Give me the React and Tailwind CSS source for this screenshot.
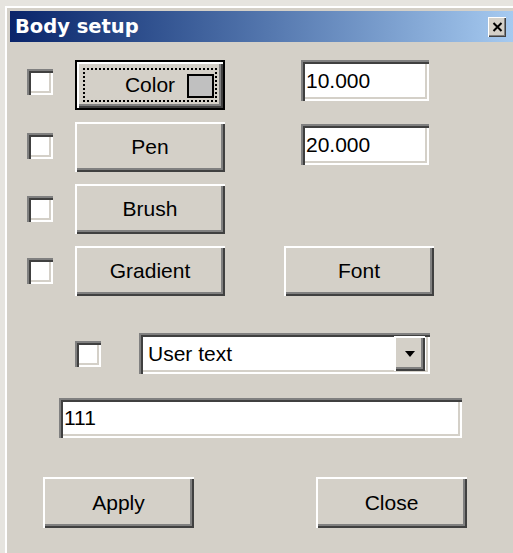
import React from 'react';

// Win2000-style bevels, shared by buttons, edits and checkboxes
const raised = 'shadow-[inset_2px_2px_#ffffff,inset_-2px_-2px_#404040,inset_-4px_-4px_#808080]';
const sunken = 'shadow-[inset_2px_2px_#808080,inset_4px_4px_#404040,inset_-2px_-2px_#ffffff,inset_-4px_-4px_#d4d0c8]';

const Checkbox = ({ className = '' }) => (
  <div className={`h-[26px] w-[26px] shrink-0 bg-white ${sunken} ${className}`} />
);

const Button = ({ children, className = '' }) => (
  <button
    type="button"
    className={`flex h-[50px] w-[150px] shrink-0 items-center justify-center bg-[#d4d0c8] text-[21px] text-black ${raised} ${className}`}
  >
    {children}
  </button>
);

const Field = ({ value, className = '' }) => (
  <div className={`flex shrink-0 items-center bg-white pl-[5px] text-[21px] text-black ${sunken} ${className}`}>
    {value}
  </div>
);

const ColorButton = ({ className = '' }) => (
  <button
    type="button"
    className={`relative flex h-[50px] w-[150px] shrink-0 items-center justify-center border-2 border-black bg-[#d4d0c8] text-[21px] text-black ${raised} ${className}`}
  >
    <span>Color</span>
    <span className="absolute inset-[6px] border-2 border-dotted border-black" />
    <span className="absolute right-[9px] top-[12px] h-[24px] w-[27px] border-2 border-black bg-[#c0c0c0]" />
  </button>
);

const Combo = ({ value, className = '' }) => (
  <div className={`flex h-[41px] w-[291px] shrink-0 items-center bg-white pl-[9px] pr-[5px] text-[21px] text-black ${sunken} ${className}`}>
    <span className="flex-1">{value}</span>
    <div className={`flex h-[35px] w-[31px] items-center justify-center bg-[#d4d0c8] ${raised}`}>
      <svg width="10" height="6" viewBox="0 0 10 6">
        <path d="M0 0h10L5 6z" fill="#000" />
      </svg>
    </div>
  </div>
);

export default function App() {
  return (
    <div className="h-[553px] w-[513px] overflow-hidden bg-[#e6e4df] pl-[5px] pt-[6px] font-['Liberation_Sans',Arial,sans-serif]">
      <div className="h-[600px] w-[560px] border-l-2 border-t-2 border-white bg-[#d4d0c8]">
        {/* caption */}
        <div className="ml-[3px] mt-[3px] flex h-[31px] w-[503px] items-center justify-between bg-gradient-to-r from-[#0a246a] to-[#a6caf0] pl-[5px] pr-[7px]">
          <span className="font-['DejaVu_Sans',Tahoma,sans-serif] text-[19.5px] font-bold text-white">Body setup</span>
          <button
            type="button"
            className="flex h-[20px] w-[18px] items-center justify-center bg-[#d4d0c8] shadow-[inset_1px_1px_#ffffff,inset_-1px_-1px_#404040,inset_-2px_-2px_#808080]"
          >
            <svg width="11" height="10" viewBox="0 0 11 10">
              <path d="M1.5 1l8 8M9.5 1l-8 8" stroke="#000" strokeWidth="2" />
            </svg>
          </button>
        </div>

        <div className="ml-[20px] mt-[18px] flex flex-col gap-[12px]">
          <div className="flex items-start">
            <Checkbox className="mt-[9px]" />
            <ColorButton className="ml-[22px]" />
            <Field value="10.000" className="ml-[76px] h-[41px] w-[128px]" />
          </div>
          <div className="flex items-start">
            <Checkbox className="mt-[11px]" />
            <Button className="ml-[22px]">Pen</Button>
            <Field value="20.000" className="ml-[76px] mt-[2px] h-[41px] w-[128px]" />
          </div>
          <div className="flex items-center">
            <Checkbox />
            <Button className="ml-[22px]">Brush</Button>
          </div>
          <div className="flex items-center">
            <Checkbox />
            <Button className="ml-[22px]">Gradient</Button>
            <Button className="ml-[59px]">Font</Button>
          </div>
        </div>

        <div className="ml-[68px] mt-[37px] flex items-center">
          <Checkbox />
          <Combo value="User text" className="ml-[38px]" />
        </div>

        <Field value="111" className="ml-[52px] mt-[24px] h-[40px] w-[403px]" />

        <div className="ml-[36px] mt-[39px] flex">
          <Button className="h-[51px] w-[151px]">Apply</Button>
          <Button className="ml-[122px] h-[51px] w-[151px]">Close</Button>
        </div>
      </div>
    </div>
  );
}
